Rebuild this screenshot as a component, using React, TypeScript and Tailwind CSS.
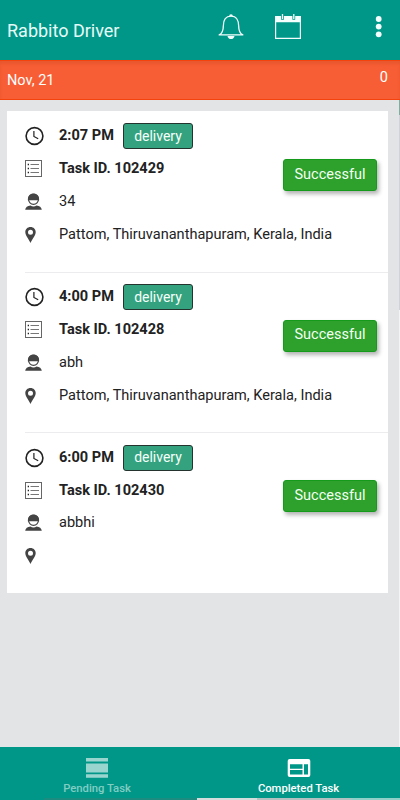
interface Task {
  id: string;
  time: string;
  customer: string;
  address: string;
}

const tasks: Task[] = [
  { id: '102429', time: '2:07 PM', customer: '34', address: 'Pattom, Thiruvananthapuram, Kerala, India' },
  { id: '102428', time: '4:00 PM', customer: 'abh', address: 'Pattom, Thiruvananthapuram, Kerala, India' },
  { id: '102430', time: '6:00 PM', customer: 'abbhi', address: '' },
];

function BellIcon() {
  return (
    <svg width="26" height="26" viewBox="0 0 26 26" fill="none" stroke="#f4fffd" strokeWidth="1.3">
      <path d="M1.2 20.9C4.6 19.2 5.3 16 5.3 12.2C5.3 6.6 7.6 2.2 13 2.2S20.7 6.6 20.7 12.2C20.7 16 21.4 19.2 24.8 20.9Z" strokeLinejoin="round" />
      <path d="M11.2 2.2a1.8 1.9 0 0 1 3.6 0z" fill="#f4fffd" stroke="none" />
      <path d="M9.5 22h7c-.3 2-1.7 3.1-3.5 3.1s-3.2-1.1-3.5-3.1z" fill="#f4fffd" stroke="none" />
    </svg>
  );
}

function CalendarIcon() {
  return (
    <svg width="26" height="26" viewBox="0 0 26 26">
      <path d="M0 2h26v23H0z M1.2 8.3v15.5h23.6V8.3z" fill="#f4fffd" fillRule="evenodd" />
      <path d="M7.5 2v3.8M18.8 2v3.8" stroke="#009788" strokeWidth="2.8" />
      <path d="M7.5 0v5M18.8 0v5" stroke="#f4fffd" strokeWidth="1.3" />
    </svg>
  );
}

function ClockIcon() {
  return (
    <svg width="20" height="20" viewBox="0 0 20 20" fill="none" stroke="#222">
      <circle cx="9.5" cy="10" r="8.4" strokeWidth="1.6" />
      <path d="M8.9 5v5.4l4.3 2.4" strokeWidth="1.2" />
    </svg>
  );
}

function ListIcon() {
  return (
    <svg width="18" height="18" viewBox="0 0 18 18" fill="none">
      <rect x="0.5" y="0.5" width="16" height="16" stroke="#666" />
      <path d="M5.5 4.5H14M5.5 8.5H14M5.5 12.5H14" stroke="#777" />
      <path d="M2.7 4.5h1.3M2.7 8.5h1.3M2.7 12.5h1.3" stroke="#222" strokeWidth="1.3" />
    </svg>
  );
}

function PersonIcon() {
  return (
    <svg width="18" height="18" viewBox="0 0 18 18">
      <circle cx="8.5" cy="6.3" r="5" fill="#fff" stroke="#444" strokeWidth="1.2" />
      <path d="M2.9 7.3C2.6 3 5.1.5 8.5.5s5.9 2.5 5.6 6.8z" fill="#444" />
      <path d="M.2 16.8c.2-2.3 2.3-4.1 5.3-4.3 1.6 1.2 4.4 1.2 6 0 3 .2 5.1 2 5.3 4.3z" fill="#444" />
    </svg>
  );
}

function PinIcon() {
  return (
    <svg width="12" height="18" viewBox="0 0 12 18">
      <path
        d="M5.500 1C2.500 1 .3 3.2.3 6.1.3 9.5 3.3 12.3 5.5 17c2.2-4.7 5.2-7.5 5.2-10.9C10.7 3.2 8.5 1 5.5 1zm0 2.7a2.5 2.5 0 1 1 0 5 2.500 2.500 0 0 1 0-5z"
        fill="#444"
        fillRule="evenodd"
      />
    </svg>
  );
}

function TaskItem({ task, first }: { task: Task; first: boolean }) {
  return (
    <li className="flex h-[160.7px] pl-[18px]">
      <div className={`relative flex flex-1 flex-col pt-[9px] text-[14.55px] text-[#222] ${first ? '' : 'shadow-[inset_0_1px_0_#ececee]'}`}>
        <div className="flex h-[32.8px] items-center">
          <span className="w-[34px]"><ClockIcon /></span>
          <span className="w-16 font-bold whitespace-nowrap">{task.time}</span>
          <span className="flex h-[26px] w-[70px] items-center justify-center rounded-[3px] border border-[#24332e] bg-[#35a27f] text-[14px] text-[#f4fffa]">
            delivery
          </span>
        </div>
        <div className="flex h-[32.8px] items-center">
          <span className="w-[34px]"><ListIcon /></span>
          <span className="font-bold">Task ID. {task.id}</span>
        </div>
        <div className="flex h-[32.8px] items-center">
          <span className="w-[34px]"><PersonIcon /></span>
          <span>{task.customer}</span>
        </div>
        <div className="flex h-[33px] items-center">
          <span className="w-[34px]"><PinIcon /></span>
          <span className="whitespace-nowrap">{task.address}</span>
        </div>
        <span className="absolute top-12 right-[11px] flex h-8 w-[94px] items-center justify-center rounded-[3px] border border-[#169a1c] bg-[#2ea02c] pb-px text-[14.5px] text-[#f2fff2] shadow-[2px_3px_4px_rgba(0,0,0,0.3)]">
          Successful
        </span>
      </div>
    </li>
  );
}

export default function App() {
  return (
    <div className="flex h-[800px] w-[400px] flex-col overflow-hidden bg-[#e2e4e6] font-['Roboto',sans-serif] text-[14.5px]">
      <header className="flex h-[60px] shrink-0 items-start bg-[#009788] pt-[14px] pl-[7px] text-[#e6fbf7]">
        <h1 className="w-[211px] pt-[3px] text-[18px] leading-7">Rabbito Driver</h1>
        <div className="w-[57px]"><BellIcon /></div>
        <CalendarIcon />
        <svg className="ml-[74px]" width="8" height="26" viewBox="0 0 8 26" fill="#f4fffd">
          <circle cx="3.7" cy="5" r="2.9" />
          <circle cx="3.7" cy="12.6" r="2.9" />
          <circle cx="3.7" cy="20.3" r="2.9" />
        </svg>
      </header>

      <div className="flex h-10 shrink-0 justify-between border-y border-[#f4430c] bg-[#f85e35] pr-3 pl-[7px] leading-5 text-white shadow-[inset_0_3px_3px_rgba(120,40,0,0.12)]">
        <span className="pt-[10px]">Nov, 21</span>
        <span className="pt-[7px]">0</span>
      </div>

      <div className="flex flex-1">
        <main className="flex-1 pt-[11px] pr-[11px] pl-[7px]">
          <ul className="bg-white">
            {tasks.map((task, i) => (
              <TaskItem key={task.id} task={task} first={i === 0} />
            ))}
          </ul>
        </main>
        {/* scroll track */}
        <div className="flex w-px flex-col bg-[#f3f4f5]">
          <div className="h-[15px] bg-[#7fae9f]" />
          <div className="h-[195px] bg-[#cfd3d9]" />
        </div>
      </div>

      <nav className="flex h-[53px] shrink-0 flex-col bg-[#009788] text-[11.25px] font-medium">
        <div className="flex h-[51px]">
          <div className="flex w-[194px] shrink-0 flex-col items-center pt-[10px] text-[#80cdc4]">
            <svg width="22" height="22" viewBox="0 0 22 22" fill="#99d5cf">
              <path d="M0 1h22v3.5H0zM0 6.5h22v9H0zM0 17.3h22v3.5H0z" />
            </svg>
            <span className="pt-px leading-[18px]">Pending Task</span>
          </div>
          <div className="flex flex-1 flex-col items-center pt-[10px] pl-[3px] text-white">
            <svg width="24" height="22" viewBox="0 0 24 22">
              <rect x="0.700" y="2" width="22.6" height="18" rx="2" fill="#fff" />
              <path d="M3 7.2h12.5v4.600H3zM3 13h12.5v4.600H3zM17 7.2h4v10.400h-4z" fill="#009788" />
            </svg>
            <span className="pt-px leading-[18px]">Completed Task</span>
          </div>
        </div>
        <div className="flex h-[2px]">
          <div className="ml-11 w-[153px] bg-[#1d8c80]" />
          <div className="w-[60px] bg-[#d5dcdc]" />
          <div className="w-[94px] bg-[#b3c2c0]" />
          <div className="flex-1 bg-[#8fd0c9]" />
        </div>
      </nav>
    </div>
  );
}
